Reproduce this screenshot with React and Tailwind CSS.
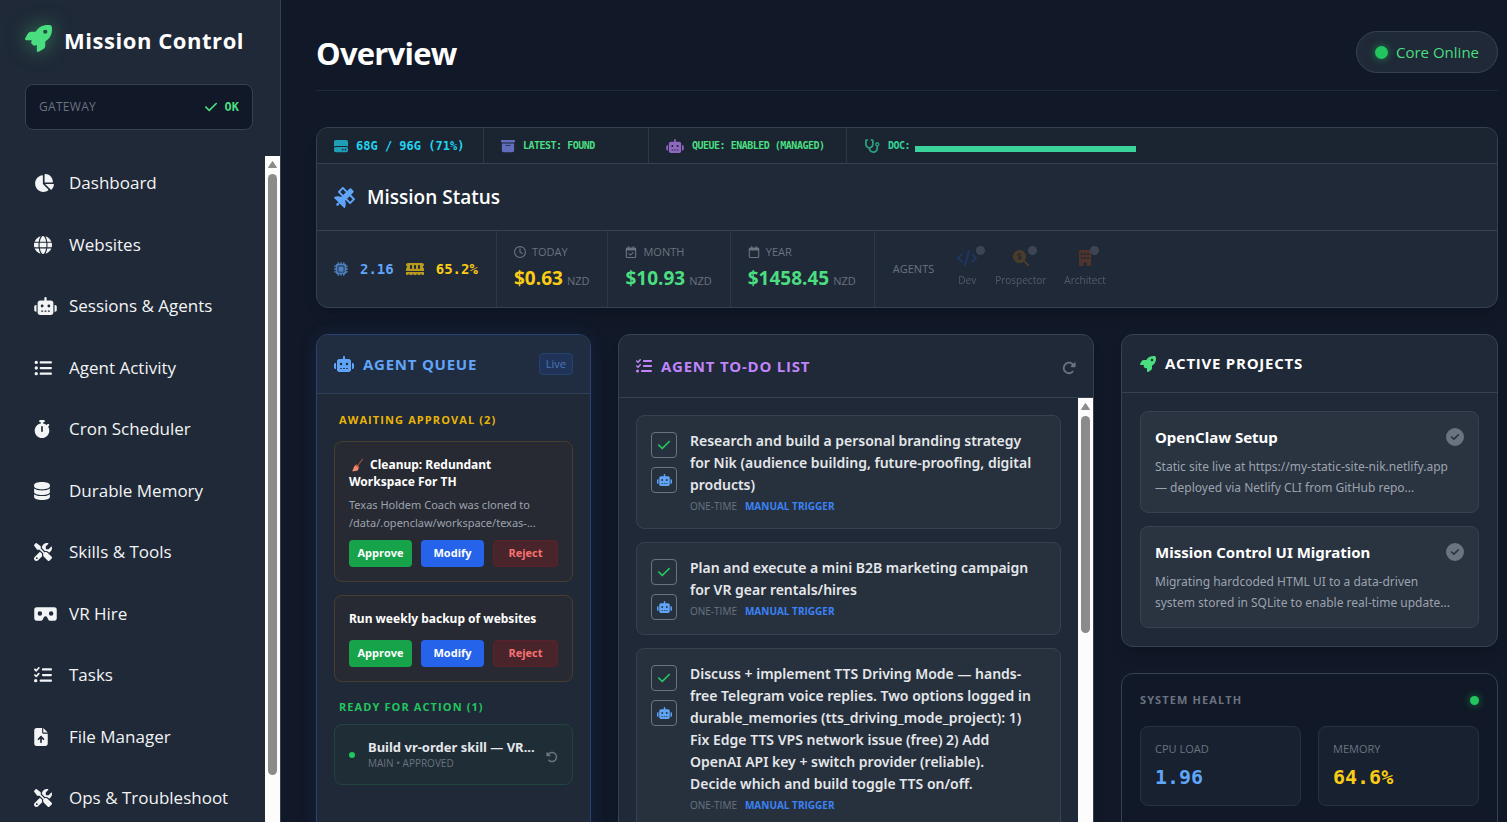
import {
  FaBoxArchive,
  FaBuilding,
  FaChartPie,
  FaCheck,
  FaCircleCheck,
  FaCode,
  FaDatabase,
  FaFileArrowUp,
  FaGlobe,
  FaHardDrive,
  FaListCheck,
  FaListUl,
  FaMagnifyingGlassDollar,
  FaMemory,
  FaMicrochip,
  FaRegCalendar,
  FaRegCalendarCheck,
  FaRegClock,
  FaRobot,
  FaRocket,
  FaRotateLeft,
  FaRotateRight,
  FaSatellite,
  FaScrewdriverWrench,
  FaStethoscope,
  FaStopwatch,
  FaVrCardboard,
} from "react-icons/fa6";

const navItems = [
  { label: "Dashboard", icon: FaChartPie, size: "w-5" },
  { label: "Websites", icon: FaGlobe, size: "w-[18px]" },
  { label: "Sessions & Agents", icon: FaRobot, size: "w-[23px]" },
  { label: "Agent Activity", icon: FaListUl, size: "w-[18px]" },
  { label: "Cron Scheduler", icon: FaStopwatch, size: "w-4" },
  { label: "Durable Memory", icon: FaDatabase, size: "w-4" },
  { label: "Skills & Tools", icon: FaScrewdriverWrench, size: "w-[18px]" },
  { label: "VR Hire", icon: FaVrCardboard, size: "w-[23px]" },
  { label: "Tasks", icon: FaListCheck, size: "w-[18px]" },
  { label: "File Manager", icon: FaFileArrowUp, size: "w-3.5" },
  { label: "Ops & Troubleshoot", icon: FaScrewdriverWrench, size: "w-[18px]" },
];

const costs = [
  { label: "TODAY", value: "$0.63", icon: FaRegClock, color: "text-[#facc15]" },
  { label: "MONTH", value: "$10.93", icon: FaRegCalendarCheck, color: "text-[#4ade80]" },
  { label: "YEAR", value: "$1458.45", icon: FaRegCalendar, color: "text-[#4ade80]" },
];

const agents = [
  { name: "Dev", icon: FaCode, color: "text-[#2563eb]", size: "w-5" },
  { name: "Prospector", icon: FaMagnifyingGlassDollar, color: "text-[#d97706]", size: "w-4" },
  { name: "Architect", icon: FaBuilding, color: "text-[#ea580c]", size: "w-3" },
];

const todos = [
  "Research and build a personal branding strategy\nfor Nik (audience building, future-proofing, digital\nproducts)",
  "Plan and execute a mini B2B marketing campaign\nfor VR gear rentals/hires",
  "Discuss + implement TTS Driving Mode — hands-\nfree Telegram voice replies. Two options logged in\ndurable_memories (tts_driving_mode_project): 1)\nFix Edge TTS VPS network issue (free) 2) Add\nOpenAI API key + switch provider (reliable).\nDecide which and build toggle TTS on/off.",
];

const projects = [
  {
    title: "OpenClaw Setup",
    text: "Static site live at https://my-static-site-nik.netlify.app\n— deployed via Netlify CLI from GitHub repo...",
  },
  {
    title: "Mission Control UI Migration",
    text: "Migrating hardcoded HTML UI to a data-driven\nsystem stored in SQLite to enable real-time update...",
  },
];

const mono = "font-['DejaVu_Sans_Mono','Liberation_Mono',monospace]";
const body = "font-['Noto_Sans','Open_Sans',sans-serif]";

const ScrollTrack = ({ thumb }) => (
  <div className="flex w-[15px] shrink-0 flex-col items-center bg-[#fcfcfc]" aria-hidden="true">
    <svg viewBox="0 0 15 18" className="h-[18px] w-[15px] shrink-0">
      <path d="M7.5 5.5 L11.5 11.5 H3.5 Z" fill="#8b8b8b" stroke="#8b8b8b" strokeLinejoin="round" />
    </svg>
    <div className={`w-[9px] rounded-full bg-[#8b8b8b] ${thumb}`} />
  </div>
);

const Broom = () => (
  <svg viewBox="0 0 16 16" className="mr-[5px] inline h-4 w-4 align-[-4px]" aria-hidden="true">
    <path d="M13.6 2.2 L8.6 8.8" stroke="#8d4a3c" strokeWidth="1.3" strokeLinecap="round" />
    <path d="M7.2 7.6 L10 9.8 L9 13.2 Q6 14.6 3 14 Q4.4 13 4.4 11.2 Q5.2 8.6 7.2 7.6 Z" fill="#f08a6c" />
    <path d="M7.2 7.6 L10 9.8 L9.6 11 L6.2 8.4 Z" fill="#c9503f" />
  </svg>
);

const Sidebar = () => (
  <aside className="flex w-[281px] shrink-0 flex-col border-r border-[#374151] bg-[#1f2937]">
    <div className="flex h-[84px] items-center gap-3 px-[25px] pb-1">
      <FaRocket className="mb-1 size-[27px] text-[#4ade80] drop-shadow-[0_0_10px_rgba(74,222,128,0.5)]" />
      <h1 className="text-[22px] leading-8 font-bold tracking-wide whitespace-nowrap text-white">
        Mission Control
      </h1>
    </div>
    <div className="mr-[27px] mb-[26px] ml-[25px] flex h-[46px] items-center justify-between rounded-lg border border-[#374151] bg-[#111827] px-[13px]">
      <span className="text-xs tracking-wide text-[#6b7280]">GATEWAY</span>
      <span className="flex items-center gap-[7px] text-xs font-bold text-[#4ade80]">
        <FaCheck className="size-3.5" />
        <span className={mono}>OK</span>
      </span>
    </div>
    <div className="flex min-h-0 flex-1">
      <nav className="flex flex-1 flex-col justify-between overflow-hidden pt-[9px] pb-1.5">
        {navItems.map(({ label, icon: Icon, size }) => (
          <a
            key={label}
            href="#"
            className="flex h-9 shrink-0 items-center pl-[34px] text-[17px] whitespace-nowrap text-[#f3f4f6]"
          >
            <span className="w-[35px] shrink-0">
              <Icon className={`h-[18px] ${size}`} />
            </span>
            {label}
          </a>
        ))}
      </nav>
      <ScrollTrack thumb="h-[601px]" />
    </div>
  </aside>
);

const MissionStatus = () => (
  <section className="mt-9 overflow-hidden rounded-xl border border-[#374151] bg-[#1f2937] shadow-lg">
    <div className={`flex h-9 border-b border-[#374151] bg-[#1b2532] font-bold ${mono}`}>
      <div className="flex w-[167px] items-center gap-2 border-r border-[#2c3747] pl-[17px] text-xs whitespace-nowrap text-[#22d3ee]">
        <FaHardDrive className="size-3.5 opacity-70" />
        68G / 96G (71%)
      </div>
      <div className="flex w-[165px] items-center gap-2 border-r border-[#2c3747] pl-[17px] text-[10px] tracking-tighter text-[#4ade80]">
        <FaBoxArchive className="size-3.5 text-[#818cf8] opacity-70" />
        LATEST: FOUND
      </div>
      <div className="flex w-[198px] items-center gap-2 border-r border-[#2c3747] pl-[17px] text-[10px] tracking-tighter whitespace-nowrap text-[#4ade80]">
        <FaRobot className="h-3.5 w-[18px] text-[#c084fc] opacity-70" />
        QUEUE: ENABLED (MANAGED)
      </div>
      <div className="flex items-center gap-2 pl-[17px] text-[10px] tracking-tighter text-[#34d399]">
        <FaStethoscope className="h-3.5 w-4 opacity-70" />
        <span className="flex items-center gap-[5px]">
          DOC:
          <span className="mt-1.5 h-1.5 w-[221px] bg-[#3bd39b]" />
        </span>
      </div>
    </div>
    <div className="flex h-[67px] items-center gap-3 border-b border-[#374151] px-[17px]">
      <FaSatellite className="size-[21px] text-[#60a5fa]" />
      <h3 className="text-[19px] font-semibold text-white">Mission Status</h3>
    </div>
    <div className="flex h-[76px]">
      <div className={`flex w-[180px] items-center border-r border-[#2c3747] pl-[17px] text-sm font-bold ${mono}`}>
        <FaMicrochip className="mr-3 size-3.5 text-[#60a5fa] opacity-70" />
        <span className="mr-3 text-[#60a5fa]">2.16</span>
        <FaMemory className="mr-3 h-4 w-[18px] text-[#facc15] opacity-70" />
        <span className="text-[#facc15]">65.2%</span>
      </div>
      {costs.map(({ label, value, icon: Icon, color }) => (
        <div key={label} className="flex flex-col justify-center border-r border-[#2c3747] pt-px pr-[18px] pl-[17px]">
          <span className="flex h-4 items-center gap-1.5 text-[11px] text-[#6b7280]">
            <Icon className="size-3" />
            {label}
          </span>
          <span className="mt-1 flex items-baseline gap-1 leading-7">
            <span className={`text-[19px] leading-7 font-bold ${color}`}>{value}</span>
            <span className="text-[11px] text-[#6b7280]">NZD</span>
          </span>
        </div>
      ))}
      <div className="flex items-center pl-[18px]">
        <span className="mr-[23px] text-[11px] text-[#6b7280]">AGENTS</span>
        <div className="flex gap-[18px]">
          {agents.map(({ name, icon: Icon, color, size }) => (
            <div key={name} className="flex flex-col items-center gap-1.5 opacity-40">
              <span className="relative">
                <Icon className={`h-4 opacity-60 ${size} ${color}`} />
                <span className="absolute -top-1 -right-2 size-[9px] rounded-full bg-[#6b7280]" />
              </span>
              <span className="text-[10px] leading-4 text-[#9ca3af]">{name}</span>
            </div>
          ))}
        </div>
      </div>
    </div>
  </section>
);

const QueueButtons = () => (
  <div className="flex gap-[9px] text-[11px] font-bold">
    <button className="h-[27px] w-[63px] rounded bg-[#16a34a] text-white">Approve</button>
    <button className="h-[27px] w-[63px] rounded bg-[#2563eb] text-white">Modify</button>
    <button className="h-[27px] flex-1 rounded border border-[#5b2229] bg-[#4a242b] text-[#f87171]">
      Reject
    </button>
  </div>
);

const AgentQueue = () => (
  <section className="min-w-0 overflow-hidden rounded-xl border border-[#2a4374] bg-[#1f2937] shadow-[0_0_20px_rgba(59,130,246,0.1)]">
    <div className="flex h-[59px] items-center justify-between border-b border-[#2f3f57] bg-[#202d41] px-[17px]">
      <h3 className="flex items-center gap-[9px] text-[15px] font-bold tracking-wider text-[#60a5fa]">
        <FaRobot className="h-4 w-5" />
        AGENT QUEUE
      </h3>
      <span className="rounded border border-[#25406f] bg-[#20345a] px-1.5 text-[11px] leading-5 text-[#4a76b8]">
        Live
      </span>
    </div>
    <div className="px-[17px] py-[18px]">
      <h4 className="mb-[13px] pl-[5px] text-[11px] leading-4 font-bold tracking-widest text-[#eab308]">
        AWAITING APPROVAL (2)
      </h4>
      <div className="space-y-[13px]">
        <div className="rounded-lg border border-[#473f2c] bg-[#272a32] px-3.5 py-3.5">
          <p className={`text-xs leading-[17px] font-bold text-white ${body}`}>
            <Broom />
            Cleanup: Redundant Workspace For TH
          </p>
          <p className={`mt-1.5 mb-2 text-[11px] leading-[18px] text-[#9ca3af] ${body}`}>
            Texas Holdem Coach was cloned to /data/.openclaw/workspace/texas-...
          </p>
          <QueueButtons />
        </div>
        <div className="rounded-lg border border-[#473f2c] bg-[#272a32] px-3.5 py-3.5">
          <p className={`mb-[13px] text-xs leading-[17px] font-bold whitespace-nowrap text-white ${body}`}>
            Run weekly backup of websites
          </p>
          <QueueButtons />
        </div>
      </div>
      <h4 className="mt-[17px] mb-[9px] pl-[5px] text-[11px] leading-4 font-bold tracking-widest text-[#22c55e]">
        READY FOR ACTION (1)
      </h4>
      <div className="flex items-center rounded-lg border border-[#21443f] bg-[#1f2d36] px-3.5 py-3.5">
        <span className="mr-[13px] size-1.5 shrink-0 rounded-full bg-[#22c55e]" />
        <div className="min-w-0 flex-1">
          <p className={`text-[13px] leading-[17px] font-bold whitespace-nowrap text-[#e5e7eb] ${body}`}>
            Build vr-order skill — VR...
          </p>
          <p className="text-[10px] leading-3.5 text-[#6b7280]">MAIN • APPROVED</p>
        </div>
        <button aria-label="Undo" className="text-[#6b7280]">
          <FaRotateLeft className="mt-1 size-3" />
        </button>
      </div>
    </div>
  </section>
);

const TodoList = () => (
  <section className="flex min-w-0 flex-col overflow-hidden rounded-xl border border-[#374151] bg-[#1f2937] shadow-lg">
    <div className="flex h-[63px] shrink-0 items-center justify-between border-b border-[#374151] px-[17px]">
      <h3 className="flex items-center gap-[9px] text-[15px] font-bold tracking-wider text-[#c084fc]">
        <FaListCheck className="size-4" />
        AGENT TO-DO LIST
      </h3>
      <button aria-label="Refresh" className="text-[#6b7280]">
        <FaRotateRight className="mt-1 size-3.5" />
      </button>
    </div>
    <div className="flex flex-1">
      <div className="min-w-0 flex-1 space-y-[13px] p-[17px]">
        {todos.map((todo) => (
          <div
            key={todo}
            className="flex gap-[13px] rounded-lg border border-[#374151] bg-[#27313d] p-3.5"
          >
            <div className="mt-0.5 flex flex-col gap-[9px]">
              <button
                aria-label="Mark done"
                className="flex size-[26px] items-center justify-center rounded border border-[#6b7280] text-[#22c55e]"
              >
                <FaCheck className="size-3.5" />
              </button>
              <button
                aria-label="Run agent"
                className="flex size-[26px] items-center justify-center rounded border border-[#6b7280] text-[#60a5fa]"
              >
                <FaRobot className="h-3 w-[15px]" />
              </button>
            </div>
            <div className="min-w-0">
              <p className={`text-sm leading-[22px] font-semibold whitespace-pre-line text-[#e5e7eb] ${body}`}>
                {todo}
              </p>
              <p className="mt-[3px] flex gap-2 text-[10px] leading-[15px]">
                <span className="text-[#6b7280]">ONE-TIME</span>
                <span className="font-bold text-[#3b82f6]">MANUAL TRIGGER</span>
              </p>
            </div>
          </div>
        ))}
      </div>
      <ScrollTrack thumb="h-[217px]" />
    </div>
  </section>
);

const ActiveProjects = () => (
  <section className="rounded-xl border border-[#374151] bg-[#1f2937] shadow-lg">
    <div className="flex h-[58px] items-center border-b border-[#374151] px-[18px]">
      <h3 className="flex items-center gap-[9px] text-[15px] font-bold tracking-wider text-white">
        <FaRocket className="size-4 text-[#4ade80]" />
        ACTIVE PROJECTS
      </h3>
    </div>
    <div className="space-y-[13px] p-[18px]">
      {projects.map(({ title, text }) => (
        <div key={title} className="rounded-lg border border-[#374151] bg-[#2a3340] p-3.5">
          <div className="flex h-[22px] items-center justify-between">
            <h4 className={`text-[15px] font-bold text-white ${body}`}>{title}</h4>
            <FaCircleCheck className="size-[18px] text-[#6b7280]" />
          </div>
          <p className={`mt-2 text-xs leading-[21px] whitespace-pre-line text-[#9ca3af] ${body}`}>{text}</p>
        </div>
      ))}
    </div>
  </section>
);

const SystemHealth = () => (
  <section className="flex-1 rounded-xl border border-[#374151] bg-[#111827] p-[18px]">
    <div className="mb-[18px] flex h-4 items-center justify-between">
      <h4 className="text-[11px] font-bold tracking-widest text-[#6b7280]">SYSTEM HEALTH</h4>
      <span className="size-[9px] rounded-full bg-[#22c55e] shadow-[0_0_8px_rgba(34,197,94,0.6)]" />
    </div>
    <div className="grid grid-cols-2 gap-[17px]">
      <div className="rounded-lg border border-[#273241] bg-[#18212f] p-3.5">
        <p className="text-[11px] leading-4 text-[#6b7280]">CPU LOAD</p>
        <p className={`mt-1.5 text-xl leading-7 font-bold text-[#60a5fa] ${mono}`}>1.96</p>
      </div>
      <div className="rounded-lg border border-[#273241] bg-[#18212f] p-3.5">
        <p className="text-[11px] leading-4 text-[#6b7280]">MEMORY</p>
        <p className={`mt-1.5 text-xl leading-7 font-bold text-[#facc15] ${mono}`}>64.6%</p>
      </div>
    </div>
  </section>
);

export default function App() {
  return (
    <div className="flex h-screen overflow-hidden bg-[#111827] font-['Open_Sans','Noto_Sans',sans-serif] text-white">
      <Sidebar />
      <main className="min-w-0 flex-1 overflow-hidden pt-[31px] pr-[9px] pl-[35px]">
        <header className="flex items-start justify-between border-b border-[#1f2937] pb-[15px]">
          <h2 className="text-[31px] leading-[44px] font-bold tracking-tight text-white">Overview</h2>
          <div className="flex h-[42px] items-center gap-2 rounded-full border border-[#374151] bg-[#1f2937] px-[18px]">
            <span className="size-[13px] rounded-full bg-[#22c55e] shadow-[0_0_8px_rgba(34,197,94,0.6)]" />
            <span className="text-[15px] font-medium text-[#4ade80]">Core Online</span>
          </div>
        </header>
        <MissionStatus />
        <div className="mt-[26px] grid grid-cols-[275fr_476fr_377fr] gap-[27px]">
          <AgentQueue />
          <TodoList />
          <div className="flex min-w-0 flex-col gap-[26px]">
            <ActiveProjects />
            <SystemHealth />
          </div>
        </div>
      </main>
    </div>
  );
}
